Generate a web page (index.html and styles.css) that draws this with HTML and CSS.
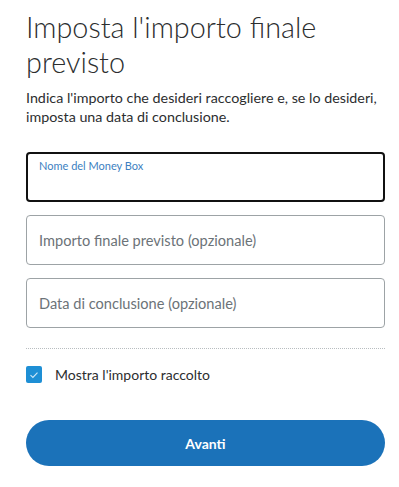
FILE: index.html
```html
<!DOCTYPE html>
<html lang="it">
<head>
<meta charset="utf-8">
<title>Money Box</title>
<link rel="stylesheet" href="styles.css">
</head>
<body>
<main class="page">
  <h1 class="title">Imposta l'importo finale previsto</h1>
  <p class="intro">Indica l'importo che desideri raccogliere e, se lo desideri, imposta una data di conclusione.</p>
  <form class="form">
    <div class="fields">
      <label class="field field--focus">
        <span class="field-label">Nome del Money Box</span>
      </label>
      <label class="field">
        <span class="field-placeholder">Importo finale previsto (opzionale)</span>
      </label>
      <label class="field">
        <span class="field-placeholder">Data di conclusione (opzionale)</span>
      </label>
    </div>
    <hr class="divider">
    <label class="check">
      <span class="check-box">
        <svg width="10" height="8" viewBox="0 0 10 8"><path d="M1.5 4.2 L3.9 6.4 L8.5 1.6" fill="none" stroke="#cfe8f7" stroke-width="1.1"/></svg>
      </span>
      <span class="check-text">Mostra l'importo raccolto</span>
    </label>
    <button type="button" class="btn">Avanti</button>
  </form>
</main>
</body>
</html>
```
FILE: styles.css
```css
html, body {
  margin: 0;
  padding: 0;
  background: #fff;
}
body {
  font-family: Lato, "Noto Sans", sans-serif;
  color: #2c2e2f;
}
.page {
  padding: 0 14px 0 26px;
}
.title {
  margin: 10px 0 0;
  font-size: 28.8px;
  line-height: 35px;
  font-weight: 300;
  color: #2c2e2f;
}
.intro {
  margin: 8px 0 0;
  font-size: 14.3px;
  line-height: 19px;
}
.form {
  margin-top: 26px;
  display: flex;
  flex-direction: column;
}
.fields {
  display: flex;
  flex-direction: column;
  gap: 13px;
}
.field {
  box-sizing: border-box;
  height: 50px;
  border: 1px solid #9da3a6;
  border-radius: 4px;
  padding: 0 12px;
  display: flex;
  align-items: center;
}
.field--focus {
  border: 2px solid #111;
  padding: 5px 11px;
  align-items: flex-start;
}
.field-label {
  font-size: 11px;
  line-height: 14px;
  color: #3d7fc1;
}
.field-placeholder {
  font-size: 14.6px;
  color: #6c7378;
}
.divider {
  margin: 20px 0 0;
  border: 0;
  border-top: 1px dotted #b8bdc0;
  height: 0;
}
.check {
  margin-top: 17px;
  display: flex;
  align-items: center;
  gap: 13px;
}
.check-box {
  width: 16px;
  height: 17px;
  border-radius: 2px;
  background: #1e8fd5;
  display: flex;
  align-items: center;
  justify-content: center;
}
.check-text {
  font-size: 14px;
  line-height: 17px;
}
.btn {
  margin-top: 37px;
  height: 46px;
  border: 0;
  border-radius: 23px;
  background: #1b72b9;
  color: #fff;
  font-family: Lato, "Noto Sans", sans-serif;
  font-weight: 700;
  font-size: 14px;
}
```
